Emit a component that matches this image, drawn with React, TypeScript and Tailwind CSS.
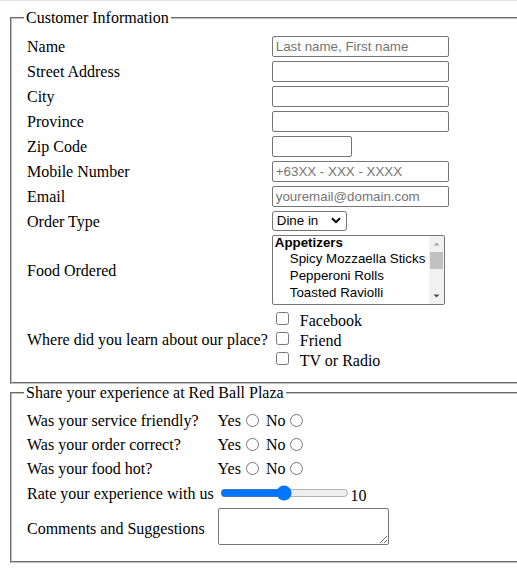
import React from "react";

const inputCls =
  "block h-[21px] border border-[#767676] rounded-[2px] bg-white pl-[3px] pr-[2px] font-['Liberation_Sans',Arial,sans-serif] text-[13.333px] text-black placeholder:text-[#757575] outline-none";

const labelTd = "px-[1px] pt-[2px] pb-0 align-middle whitespace-nowrap";

function TextRow({ label, placeholder, w = "w-[177px]" }: { label: string; placeholder?: string; w?: string }) {
  return (
    <tr>
      <td className={labelTd}>{label}</td>
      <td className="p-[1px] align-middle">
        <input type="text" placeholder={placeholder} className={`${inputCls} ${w}`} />
      </td>
    </tr>
  );
}

function YesNo({ name }: { name: string }) {
  return (
    <div className="flex items-center h-[20px] whitespace-nowrap">
      <span className="mt-[2px]">Yes</span>
      <input type="radio" name={name} className="ml-[5px] mr-[3px] w-[13px] h-[13px]" />
      <span className="ml-[4px] mt-[2px]">No</span>
      <input type="radio" name={name} className="ml-[5px] mr-[3px] w-[13px] h-[13px]" />
    </div>
  );
}

function Check({ label }: { label: string }) {
  return (
    <div className="flex items-start h-[20px] whitespace-nowrap">
      <input type="checkbox" className="ml-[4px] mr-[3px] mt-[3px] w-[13px] h-[13px]" />
      <span className="ml-[8px] mt-[2px] leading-[20px]">{label}</span>
    </div>
  );
}

export default function App() {
  return (
    <div className="w-[517px] h-[573px] overflow-hidden bg-white text-black font-['Liberation_Serif','Times_New_Roman',serif] text-[16px] leading-[normal]">
      <div className="h-px bg-[#e4e4e4]" />
      <div className="pt-[8px] pl-[8px]">
        <fieldset className="mx-[2px] w-[560px] border-2 [border-style:groove] [border-color:#c0c0c0] px-[12px] pt-[5.6px] pb-[10px]">
          <legend className="px-[2px]">Customer Information</legend>
          <table className="border-separate border-spacing-[2px]">
            <tbody>
              <TextRow label="Name" placeholder="Last name, First name" />
              <TextRow label="Street Address" />
              <TextRow label="City" />
              <TextRow label="Province" />
              <TextRow label="Zip Code" w="w-[80px]" />
              <TextRow label="Mobile Number" placeholder="+63XX - XXX - XXXX" />
              <TextRow label="Email" placeholder="youremail@domain.com" />
              <tr>
                <td className={labelTd}>Order Type</td>
                <td className="p-[1px] align-middle">
                  <div className="w-[75px] h-[20px] border border-[#767676] rounded-[3px] bg-white flex items-center justify-between pl-[4px] pr-[5px] font-['Liberation_Sans',Arial,sans-serif] text-[13.333px]">
                    <span>Dine in</span>
                    <svg width="10" height="7" viewBox="0 0 10 7">
                      <path d="M1 1.2 L5 5.2 L9 1.2" stroke="#000" strokeWidth="2" fill="none" />
                    </svg>
                  </div>
                </td>
              </tr>
              <tr>
                <td className={labelTd}>Food Ordered</td>
                <td className="p-[1px] align-middle">
                  <div className="w-[173px] h-[70px] border border-[#767676] rounded-[2px] bg-white flex overflow-hidden font-['Liberation_Sans',Arial,sans-serif] text-[13.333px] leading-[16.7px]">
                    <div className="flex-1 whitespace-nowrap overflow-hidden -mt-[1px]">
                      <div className="pl-[2px] font-bold">Appetizers</div>
                      <div className="pl-[17px]">Spicy Mozzaella Sticks</div>
                      <div className="pl-[17px]">Pepperoni Rolls</div>
                      <div className="pl-[17px]">Toasted Raviolli</div>
                    </div>
                    <div className="w-[15px] bg-[#f1f1f1] flex flex-col items-center">
                      <svg width="15" height="16" viewBox="0 0 15 16" className="shrink-0">
                        <path d="M4.5 9.5 L7.5 6.5 L10.5 9.5 Z" fill="#a3a3a3" />
                      </svg>
                      <div className="w-[13px] h-[17px] bg-[#c1c1c1]" />
                      <div className="flex-1" />
                      <svg width="15" height="16" viewBox="0 0 15 16" className="shrink-0">
                        <path d="M4.5 6.5 L7.5 9.5 L10.5 6.5 Z" fill="#505050" />
                      </svg>
                    </div>
                  </div>
                </td>
              </tr>
              <tr>
                <td className={labelTd}>Where did you learn about our place?</td>
                <td className="p-[1px] align-middle">
                  <Check label="Facebook" />
                  <Check label="Friend" />
                  <Check label="TV or Radio" />
                </td>
              </tr>
            </tbody>
          </table>
        </fieldset>
        <fieldset className="mx-[2px] w-[560px] border-2 [border-style:groove] [border-color:#c0c0c0] px-[12px] pt-[5.6px] pb-[10px]">
          <legend className="px-[2px]">Share your experience at Red Ball Plaza</legend>
          <table className="border-separate border-spacing-[2px]">
            <tbody>
              <tr>
                <td className={labelTd}>Was your service friendly?</td>
                <td className="p-[1px] align-middle"><YesNo name="q1" /></td>
              </tr>
              <tr>
                <td className={labelTd}>Was your order correct?</td>
                <td className="p-[1px] align-middle"><YesNo name="q2" /></td>
              </tr>
              <tr>
                <td className={labelTd}>Was your food hot?</td>
                <td className="p-[1px] align-middle"><YesNo name="q3" /></td>
              </tr>
              <tr>
                <td className={labelTd}>Rate your experience with us</td>
                <td className="p-[1px] align-middle">
                  <div className="flex items-center h-[22px] whitespace-nowrap">
                    <input type="range" min={0} max={20} defaultValue={10} className="mx-[2px] w-[129px] h-[16px]" />
                    <span className="mt-[5px]">10</span>
                  </div>
                </td>
              </tr>
              <tr>
                <td className={labelTd}>Comments and Suggestions</td>
                <td className="p-[1px] align-top">
                  <div className="h-[40px]">
                    <textarea className="block w-[171px] h-[37px] border border-[#767676] rounded-[2px] bg-white p-[2px] font-['Liberation_Mono',monospace] text-[13.333px] outline-none" />
                  </div>
                </td>
              </tr>
            </tbody>
          </table>
        </fieldset>
      </div>
    </div>
  );
}
